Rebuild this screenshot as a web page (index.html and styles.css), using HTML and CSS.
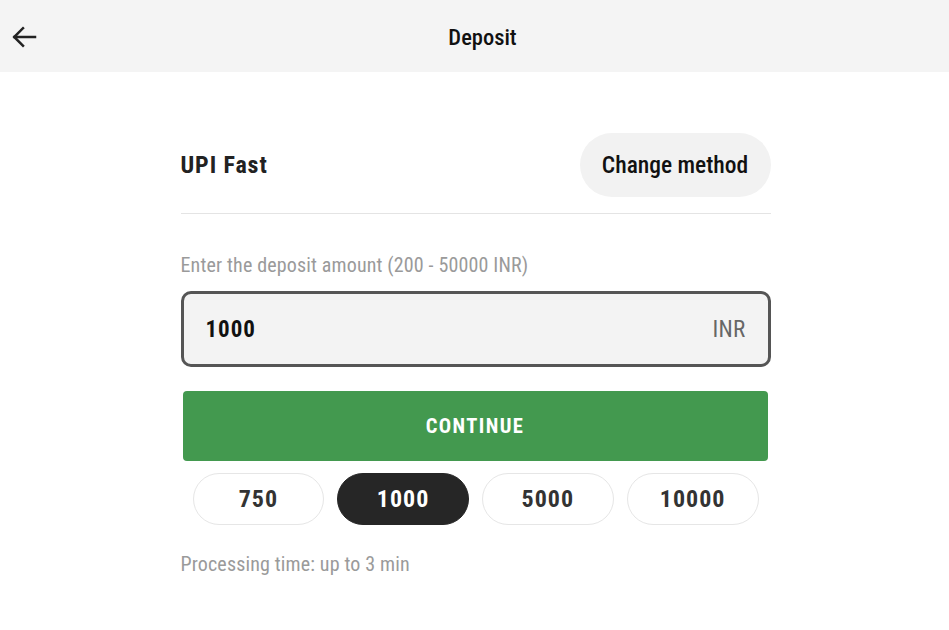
FILE: index.html
```html
<!DOCTYPE html>
<html lang="en">
<head>
<meta charset="utf-8">
<title>Deposit</title>
<link rel="stylesheet" href="styles.css">
</head>
<body>
<header class="topbar">
  <button class="back" aria-label="Back">
    <svg width="26" height="24" viewBox="0 0 26 24" fill="none" stroke="#222" stroke-width="2.5" stroke-linecap="square">
      <path d="M24 12H3.5"/>
      <path d="M12 3.2L3.2 12L12 20.8"/>
    </svg>
  </button>
  <h1 class="title">Deposit</h1>
</header>
<main class="content">
  <div class="method-row">
    <span class="method-name">UPI Fast</span>
    <button class="change-btn">Change method</button>
  </div>
  <div class="divider"></div>
  <label class="amount-label">Enter the deposit amount (200 - 50000 INR)</label>
  <div class="amount-field">
    <span class="amount-value">1000</span>
    <span class="amount-currency">INR</span>
  </div>
  <button class="continue-btn">CONTINUE</button>
  <div class="chips">
    <button class="chip">750</button>
    <button class="chip chip-active">1000</button>
    <button class="chip">5000</button>
    <button class="chip">10000</button>
  </div>
  <p class="processing">Processing time: up to 3 min</p>
</main>
</body>
</html>
```
FILE: styles.css
```css
* { box-sizing: border-box; }
html, body { margin: 0; padding: 0; background: #fff; }
body {
  font-family: "Roboto Condensed", "Liberation Sans Narrow", Roboto, sans-serif;
  font-stretch: condensed;
  color: #222;
}
button { font-family: inherit; font-stretch: inherit; border: none; cursor: pointer; }
.topbar {
  height: 72px;
  background: #f4f4f4;
  display: flex;
  align-items: center;
  justify-content: center;
  position: relative;
}
.back {
  position: absolute;
  left: 11px;
  top: 24px;
  background: transparent;
  padding: 0;
  width: 28px;
  height: 26px;
  display: flex;
  align-items: center;
}
.title {
  margin: 0;
  padding: 2px 0 0 16px;
  font-size: 22.5px;
  line-height: 28px;
  font-weight: 500;
  color: #111;
}
.content {
  width: 592px;
  margin: 0 auto;
  padding-top: 61px;
  padding-left: 2px;
  display: flex;
  flex-direction: column;
}
.method-row {
  display: flex;
  justify-content: space-between;
  align-items: center;
  height: 64px;
}
.method-name { font-size: 24px; font-weight: 700; color: #222; letter-spacing: 0.9px; }
.change-btn {
  height: 64px;
  width: 191px;
  padding: 0;
  border-radius: 32px;
  background: #f2f2f2;
  font-size: 23.5px;
  font-weight: 500;
  color: #111;
}
.divider { height: 1px; background: #e4e4e4; margin-top: 16px; }
.amount-label {
  margin-top: 39px;
  font-size: 20px;
  color: #9a9a9a;
  line-height: 24px;
  letter-spacing: 0.15px;
}
.amount-field {
  margin-top: 14px;
  height: 76px;
  border: 3px solid #555;
  border-radius: 10px;
  background: #f3f3f3;
  display: flex;
  align-items: center;
  justify-content: space-between;
  padding: 0 22px 0 22px;
}
.amount-value { font-size: 23px; font-weight: 700; color: #111; letter-spacing: 1px; }
.amount-currency { font-size: 23px; color: #666; letter-spacing: 0.3px; }
.continue-btn {
  margin: 24px 3px 0 2px;
  height: 70px;
  border-radius: 4px;
  background: #43994f;
  color: #fff;
  font-size: 20.5px;
  font-weight: 700;
  letter-spacing: 1.4px;
}
.chips {
  display: flex;
  gap: 13px;
  margin-top: 12px;
  padding: 0 12px;
}
.chip {
  flex: 1;
  height: 52px;
  border-radius: 26px;
  background: #fff;
  border: 1px solid #e6e6e6;
  font-size: 24px;
  font-weight: 700;
  color: #333;
  letter-spacing: 1px;
}
.chip-active { background: #262626; border-color: #262626; color: #fff; }
.processing {
  margin: 27px 0 0;
  font-size: 20px;
  line-height: 24px;
  color: #9a9a9a;
  letter-spacing: 0.15px;
}
```
